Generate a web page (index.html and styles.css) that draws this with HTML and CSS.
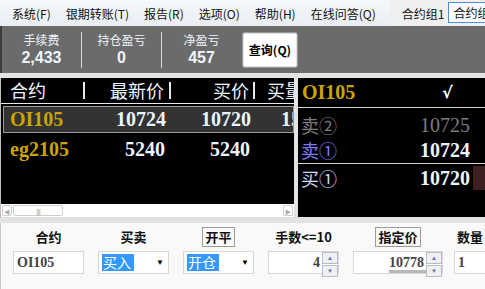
FILE: index.html
```html
<!DOCTYPE html>
<html lang="zh-CN">
<head>
<meta charset="UTF-8">
<title>交易终端</title>
<link rel="stylesheet" href="styles.css">
</head>
<body>

<div class="menubar">
    <span class="menu-item">系统(F)</span>
    <span class="menu-item">银期转账(T)</span>
    <span class="menu-item">报告(R)</span>
    <span class="menu-item">选项(O)</span>
    <span class="menu-item">帮助(H)</span>
    <span class="menu-item">在线问答(Q)</span>
    <div class="tabs">
        <span class="tab">合约组1</span>
        <span class="tab active">合约组</span>
    </div>
</div>

<div class="summary">
    <div class="stat">
        <div class="stat-label">手续费</div>
        <div class="stat-value">2,433</div>
    </div>
    <div class="stat">
        <div class="stat-label">持仓盈亏</div>
        <div class="stat-value">0</div>
    </div>
    <div class="stat">
        <div class="stat-label">净盈亏</div>
        <div class="stat-value">457</div>
    </div>
    <button class="query-btn">查询(Q)</button>
</div>

<div class="main">
    <div class="quotes">
        <div class="quote-table">
            <div class="q-row q-head">
                <span class="c-name">合约</span>
                <span class="c-last">最新价</span>
                <span class="c-bid">买价</span>
                <span class="c-vol">买量</span>
            </div>
            <div class="q-row selected">
                <span class="c-name sym">OI105</span>
                <span class="c-last">10724</span>
                <span class="c-bid">10720</span>
                <span class="c-vol">15</span>
            </div>
            <div class="q-row">
                <span class="c-name sym">eg2105</span>
                <span class="c-last">5240</span>
                <span class="c-bid">5240</span>
                <span class="c-vol"></span>
            </div>
        </div>
        <div class="hscroll">
            <span class="sb-arrow">&#9664;</span>
            <span class="sb-thumb">||||||</span>
            <span class="sb-track"></span>
            <span class="sb-arrow">&#9654;</span>
        </div>
    </div>

    <div class="depth">
        <div class="depth-head">
            <span class="sym">OI105</span>
            <span class="check">√</span>
        </div>
        <div class="depth-row ask2">
            <span class="lvl">卖②</span><span class="px">10725</span>
        </div>
        <div class="depth-row ask1">
            <span class="lvl">卖①</span><span class="px">10724</span>
        </div>
        <div class="depth-row bid1">
            <span class="lvl">买①</span><span class="px">10720</span><span class="vol-mark"></span>
        </div>
    </div>
</div>

<div class="order">
    <div class="field">
        <div class="f-label">合约</div>
        <div class="box text">OI105</div>
    </div>
    <div class="field">
        <div class="f-label">买卖</div>
        <div class="box select"><span class="sel">买入</span><span class="drop">&#9660;</span></div>
    </div>
    <div class="field">
        <div class="f-label"><span class="framed">开平</span></div>
        <div class="box select"><span class="sel">开仓</span><span class="drop">&#9660;</span></div>
    </div>
    <div class="field">
        <div class="f-label">手数&lt;=10</div>
        <div class="box spin"><span class="num">4</span><span class="spin-btns"><i>&#9650;</i><i>&#9660;</i></span></div>
    </div>
    <div class="field wide">
        <div class="f-label"><span class="framed">指定价</span></div>
        <div class="box spin"><span class="num under">10778</span><span class="spin-btns"><i>&#9650;</i><i>&#9660;</i></span></div>
    </div>
    <div class="field last">
        <div class="f-label left">数量</div>
        <div class="box text">1</div>
    </div>
</div>

</body>
</html>
```

FILE: styles.css
```css
/* trading terminal */
body {
    margin: 0;
    width: 485px;
    height: 289px;
    overflow: hidden;
    background-color: #e3e3e3;
    font-family: "Noto Sans CJK SC", "Liberation Sans", sans-serif;
}

.menubar {
    display: flex;
    align-items: center;
    height: 26px;
    background: linear-gradient(#f6f8fb, #e9eef4);
    font-size: 12px;
    color: #111;
    white-space: nowrap;
    overflow: hidden;
}

.menu-item {
    padding: 0 7px;
    margin-left: 1px;
}

.menu-item:first-child {
    margin-left: 5px;
}

.tabs {
    display: flex;
    align-items: stretch;
    height: 26px;
    margin-left: 7px;
    background-color: #f0f0f0;
}

.tab {
    display: flex;
    align-items: center;
    padding: 0 4px 0 12px;
}

.tab.active {
    margin: 2px 0 3px 0;
    padding: 0 4px;
    background-color: #fff;
    border: 1px solid #4a90e2;
}

.summary {
    display: flex;
    align-items: center;
    height: 47px;
    background-color: #6b6b6b;
    border-left: 2px solid #3c3c3c;
}

.stat {
    width: 79px;
    height: 36px;
    text-align: center;
    border-right: 1px solid #d8d8d8;
    color: #eef4fa;
}

.stat:nth-child(3) {
    border-right: none;
}

.stat-label {
    font-size: 12px;
    line-height: 16px;
}

.stat-value {
    font-family: "Liberation Sans", sans-serif;
    font-weight: bold;
    font-size: 16px;
    line-height: 20px;
}

.query-btn {
    margin-left: 1px;
    width: 56px;
    height: 36px;
    padding: 0;
    background-color: #fff;
    border: 1px solid #9a9a9a;
    border-radius: 3px;
    box-shadow: inset 0 0 0 1px #e0e0e0;
    font-family: "Noto Sans CJK SC", sans-serif;
    font-weight: bold;
    font-size: 12px;
    color: #000;
}

.main {
    display: flex;
    gap: 4px;
    margin-top: 5px;
    height: 140px;
}

.quotes {
    display: flex;
    flex-direction: column;
    width: 293px;
    border-left: 1px solid #bdbdbd;
}

.quote-table {
    flex: 1;
    background-color: #000;
    padding-left: 2px;
    overflow: hidden;
}

.q-row {
    display: flex;
    align-items: center;
    height: 24px;
    font-family: "Liberation Serif", "Noto Sans CJK SC", serif;
    font-weight: bold;
    font-size: 20px;
    color: #eaf6ff;
    white-space: nowrap;
    overflow: hidden;
}

.q-row span {
    flex: none;
}

.q-head {
    height: 25px;
    font-family: "Noto Sans CJK SC", sans-serif;
    font-weight: normal;
    font-size: 18px;
    border-bottom: 1px solid #e8e8e8;
    margin-left: -2px;
    padding-left: 2px;
    margin-bottom: 2px;
}

.q-head span {
    border-right: 2px solid #e8e8e8;
    height: 17px;
    line-height: 17px;
}

.q-head .c-vol {
    border-right: none;
}

.selected {
    height: 25px;
    background-color: #333;
    border: 1px solid #9a9a9a;
    margin-bottom: 4px;
}

.c-name {
    width: 82px;
    padding-left: 7px;
    box-sizing: border-box;
}

.selected .c-name {
    padding-left: 6px;
}

.c-last {
    width: 86px;
    text-align: right;
    padding-right: 6px;
    box-sizing: border-box;
}

.c-bid {
    width: 84px;
    text-align: right;
    padding-right: 5px;
    box-sizing: border-box;
}

.c-vol {
    padding-left: 25px;
}

.q-head .c-last {
    padding-right: 5px;
}

.q-head .c-bid {
    padding-right: 4px;
}

.q-head .c-vol {
    padding-left: 12px;
}

.sym {
    color: #cca400;
}

.hscroll {
    display: flex;
    align-items: center;
    gap: 1px;
    height: 13px;
    padding: 0 1px;
    background-color: #fff;
    border-bottom: 1px solid #e0e0e0;
}

.sb-arrow {
    width: 10px;
    height: 11px;
    font-size: 6px;
    line-height: 11px;
    text-align: center;
    color: #a8a8a8;
    border: 1px solid #cfcfcf;
    border-radius: 2px;
    box-sizing: border-box;
}

.sb-thumb {
    width: 50px;
    height: 11px;
    font-size: 6px;
    line-height: 11px;
    text-align: center;
    letter-spacing: -1px;
    color: #aaa;
    border: 1px solid #cfcfcf;
    border-radius: 2px;
    box-sizing: border-box;
}

.sb-track {
    flex: 1;
}

.depth {
    flex: 1;
    background-color: #000;
    height: 139px;
    font-family: "Noto Sans CJK SC", sans-serif;
    font-size: 18px;
}

.depth-head {
    display: flex;
    align-items: center;
    height: 29px;
    padding-left: 4px;
    border-bottom: 1px solid #d0d0d0;
    font-family: "Liberation Serif", serif;
    font-weight: bold;
    font-size: 20px;
}

.depth-head .sym {
    width: 140px;
}

.check {
    color: #fff;
    font-family: "DejaVu Sans", sans-serif;
    font-size: 16px;
}

.depth-row {
    display: flex;
    align-items: center;
    height: 24px;
    padding-left: 3px;
}

.lvl {
    width: 115px;
}

.depth-row.ask2 {
    margin-top: 5px;
}

.depth-row.ask1 {
    height: 26px;
    border-bottom: 1px solid #d0d0d0;
}

.depth-row.bid1 {
    margin-top: 2px;
}

.px {
    width: 54px;
    text-align: right;
    font-family: "Liberation Serif", serif;
    font-weight: bold;
    font-size: 20px;
    color: #eaf6ff;
}

.ask2 {
    color: #7c7c7c;
}

.ask2 .px {
    font-weight: normal;
    color: #7c7c7c;
}

.ask1 {
    color: #7d7dff;
}

.bid1 {
    color: #cfd8ff;
}

.vol-mark {
    width: 13px;
    height: 24px;
    margin-left: 3px;
    background-color: #3e2020;
}

.order {
    display: flex;
    gap: 14px;
    margin-top: 5px;
    height: 67px;
    padding-left: 12px;
    background-color: #f9f9f9;
    border-left: 1px solid #c8c8c8;
    font-size: 13px;
    overflow: hidden;
}

.field {
    width: 71px;
    flex: none;
}

.field.wide {
    width: 90px;
}

.field.last {
    margin-left: -3px;
    width: 60px;
}

.f-label {
    height: 21px;
    margin-top: 3px;
    margin-bottom: 4px;
    display: flex;
    align-items: center;
    justify-content: center;
    font-weight: bold;
    color: #111;
    white-space: nowrap;
}

.f-label.left {
    justify-content: flex-start;
    padding-left: 3px;
}

.framed {
    padding: 0 2px;
    line-height: 18px;
    border: 1px solid #a09a90;
}

.box {
    display: flex;
    align-items: center;
    height: 23px;
    background-color: #fff;
    border: 1px solid #d4d8dc;
    box-sizing: border-box;
    font-family: "Liberation Serif", serif;
    font-weight: bold;
    font-size: 14px;
    color: #444;
}

.box.text {
    padding-left: 3px;
}

.select {
    padding-left: 3px;
    justify-content: space-between;
}

.sel {
    background-color: #3399ff;
    color: #fff;
    font-family: "Noto Sans CJK SC", sans-serif;
    font-weight: normal;
    line-height: 17px;
    padding: 0 1px;
    width: 30px;
}

.drop {
    font-size: 8px;
    color: #000;
    padding-right: 4px;
}

.spin {
    justify-content: flex-end;
}

.num {
    padding-right: 2px;
}

.under {
    border-bottom: 3px solid #b8b8b8;
    margin-top: 3px;
    line-height: 14px;
}

.spin-btns {
    display: flex;
    flex-direction: column;
    gap: 1px;
    width: 16px;
    height: 21px;
}

.spin-btns i {
    flex: 1;
    font-style: normal;
    font-size: 6px;
    line-height: 10px;
    text-align: center;
    color: #5a6ea8;
    background-color: #eef0f4;
    border: 1px solid #b8bcc4;
    box-sizing: border-box;
}
```
